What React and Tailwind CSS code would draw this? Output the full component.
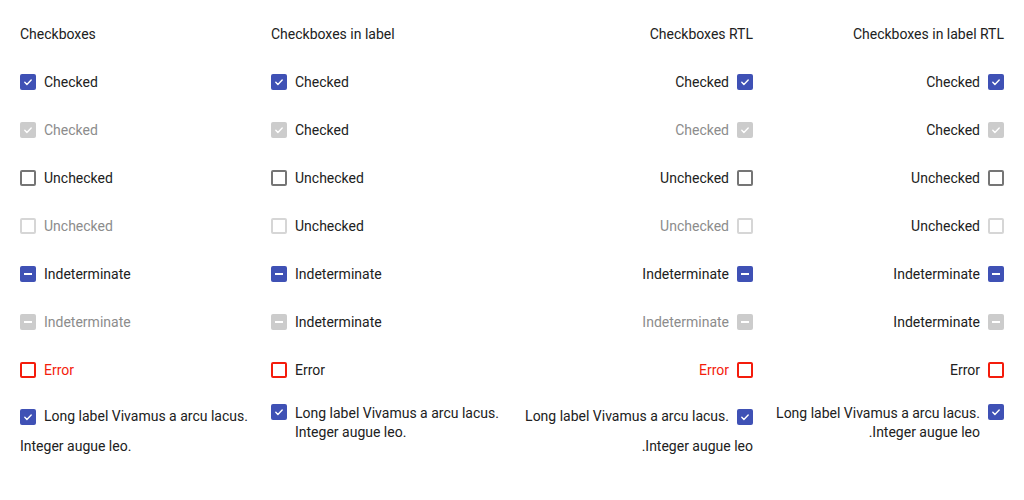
const rows = [
  { label: "Checked", state: "checked" },
  { label: "Checked", state: "checked", disabled: true },
  { label: "Unchecked", state: "unchecked" },
  { label: "Unchecked", state: "unchecked", disabled: true },
  { label: "Indeterminate", state: "indeterminate" },
  { label: "Indeterminate", state: "indeterminate", disabled: true },
  { label: "Error", state: "unchecked", error: true },
];

function Box({ state, disabled, error }) {
  let cls = "border-2 border-[#757575] bg-white";
  if (state !== "unchecked") cls = disabled ? "bg-[#cccccc]" : "bg-[#3f51b5]";
  else if (disabled) cls = "border-2 border-[#d6d6d6] bg-white";
  else if (error) cls = "border-2 border-[#f41c0c] bg-white";

  return (
    <span className={`flex h-4 w-4 shrink-0 items-center justify-center rounded-[2px] ${cls}`}>
      {state === "checked" && (
        <svg width="16" height="16" viewBox="0 0 16 16" fill="none">
          <path d="M4.8 8.3l2.1 2.1 4.3-4.5" stroke="white" strokeWidth="1.4" strokeLinecap="round" strokeLinejoin="round" />
        </svg>
      )}
      {state === "indeterminate" && <span className="h-[2px] w-2 bg-white" />}
    </span>
  );
}

function Column({ title, rtl, inLabel }) {
  const textCls = (r) => {
    if (inLabel) return "text-[#212121]";
    if (r.disabled) return "text-[#8c8c8c]";
    if (r.error) return "text-[#f41c0c]";
    return "text-[#212121]";
  };

  return (
    <div dir={rtl ? "rtl" : "ltr"} className="flex flex-col">
      <div className="flex h-12 items-center text-[#212121]">{title}</div>
      {rows.map((r, i) => (
        <div key={i} className="flex h-12 items-center gap-2">
          <Box {...r} />
          <span className={textCls(r)}>{r.label}</span>
        </div>
      ))}
      {inLabel ? (
        <div className="flex items-start gap-2 pt-[10px] leading-[19px]">
          <Box state="checked" />
          <span className="text-[#212121]">Long label Vivamus a arcu lacus. Integer augue leo.</span>
        </div>
      ) : (
        <div className="pt-[4px] leading-5 text-[#212121]">
          <span className="me-2 inline-flex h-[38px] items-center align-middle">
            <Box state="checked" />
          </span>
          Long label Vivamus a arcu lacus. Integer augue leo.
        </div>
      )}
    </div>
  );
}

export default function App() {
  return (
    <div
      className="grid min-h-[500px] grid-cols-4 gap-x-5 bg-white px-5 pt-[10px] text-sm"
      style={{ fontFamily: "Roboto, 'Liberation Sans', sans-serif" }}
    >
      <Column title="Checkboxes" />
      <Column title="Checkboxes in label" inLabel />
      <Column title="Checkboxes RTL" rtl />
      <Column title="Checkboxes in label RTL" rtl inLabel />
    </div>
  );
}
